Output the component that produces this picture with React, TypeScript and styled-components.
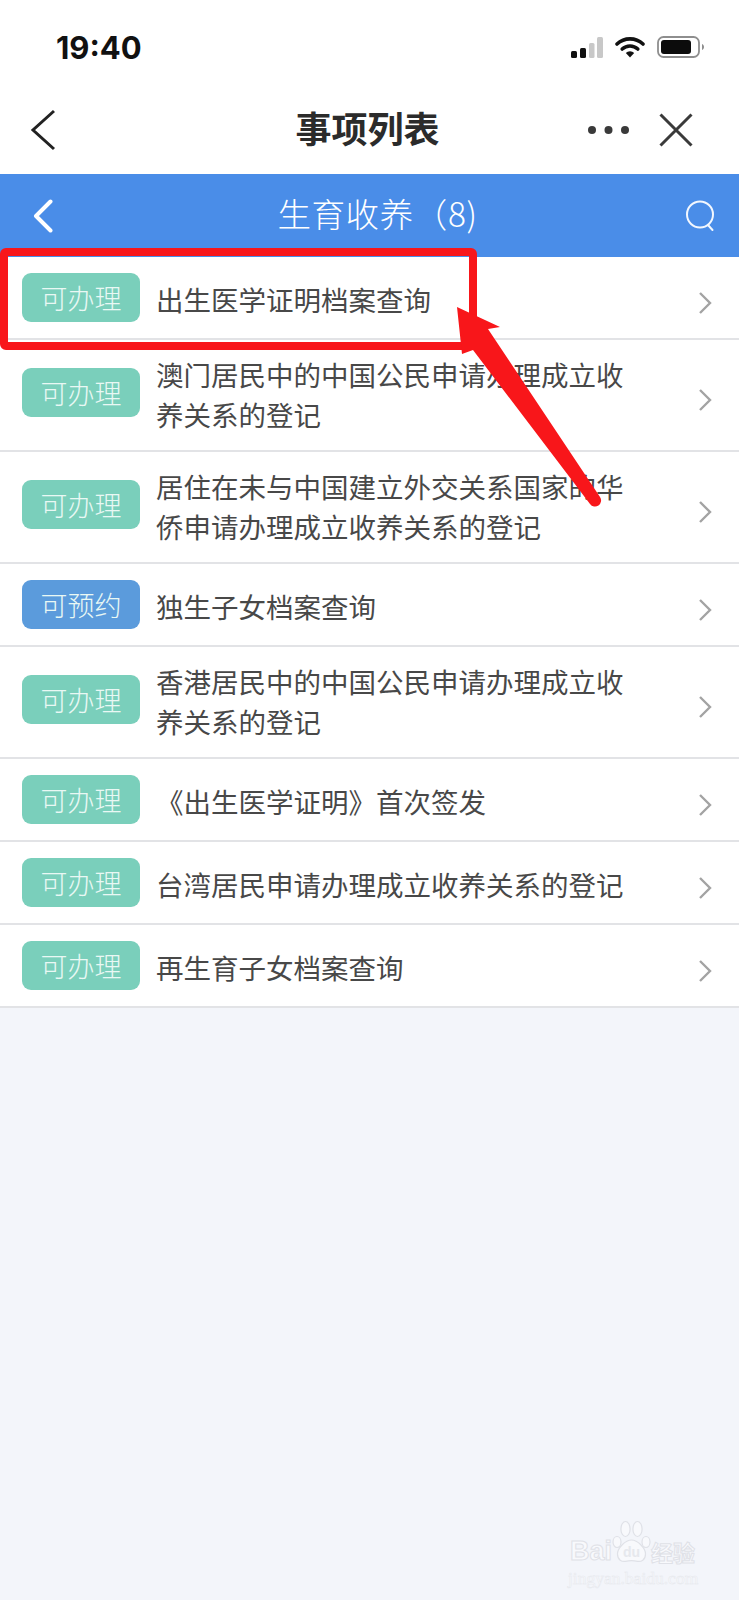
import React from 'react';
import styled, { createGlobalStyle } from 'styled-components';

const GlobalStyle = createGlobalStyle`
  html, body {
    margin: 0;
    padding: 0;
    background: #f3f5fa;
  }
  * {
    box-sizing: border-box;
  }
`;

const Page = styled.div`
  position: relative;
  width: 739px;
  height: 1600px;
  overflow: hidden;
  background: #f3f5fa;
  font-family: 'Noto Sans CJK SC', 'Noto Sans', sans-serif;
`;

const StatusBar = styled.div`
  height: 94px;
  padding: 0 35px 0 56px;
  background: #fff;
  display: flex;
  align-items: center;
  justify-content: space-between;
`;

const Clock = styled.span`
  font-family: Inter, 'Liberation Sans', sans-serif;
  font-size: 31px;
  font-weight: 700;
  color: #111;
`;

const StatusIcons = styled.div`
  display: flex;
  align-items: flex-end;
  gap: 12px;
`;

const NavBar = styled.div`
  height: 80px;
  padding: 0 46px 8px 30px;
  background: #fff;
  display: flex;
  align-items: center;
  justify-content: space-between;
`;

const NavTitle = styled.h1`
  margin: 0 0 6px;
  font-size: 36px;
  font-weight: 700;
  color: #2b2b2b;
  flex: 1;
  text-align: center;
  padding-left: 92px;
`;

const NavActions = styled.div`
  display: flex;
  align-items: center;
  gap: 29px;
`;

const BlueBar = styled.div`
  height: 83px;
  padding: 0 23px 0 33px;
  background: #4a8de8;
  display: flex;
  align-items: center;
  justify-content: space-between;
`;

const BlueTitle = styled.div`
  font-size: 33.5px;
  font-weight: 300;
  letter-spacing: 0.6px;
  color: #fff;
  margin: 0 0 6px 17px;
`;

const List = styled.div`
  background: #fff;
`;

const Row = styled.div<{ $tall?: boolean }>`
  height: ${(p) => (p.$tall ? 112 : 83)}px;
  padding: 0 27px 0 22px;
  display: flex;
  align-items: center;
  border-bottom: 2px solid #e2e3e6;
`;

const Badge = styled.span<{ $blue?: boolean; $tall?: boolean }>`
  flex: none;
  width: 118px;
  height: 49px;
  margin: 0 16px ${(p) => (p.$tall ? 6 : 0)}px 0;
  border-radius: 9px;
  background: ${(p) => (p.$blue ? '#5b9bdc' : '#7acfbb')};
  color: #e9f8f4;
  font-size: 27px;
  font-weight: 300;
  line-height: 49px;
  text-align: center;
`;

const RowText = styled.div<{ $tall?: boolean }>`
  flex: 1;
  font-size: 27.5px;
  line-height: 40px;
  color: #484848;
  padding-right: 58px;
  margin: ${(p) => (p.$tall ? '0 0 2px' : '2px 0 0')};
`;

const RowChevron = styled.svg`
  flex: none;
  margin-top: 10px;
`;

const Watermark = styled.div`
  position: absolute;
  left: 568px;
  top: 1520px;
  width: 132px;
  color: #f8f9fc;
`;

const MarkTop = styled.div`
  display: flex;
  align-items: flex-end;
  height: 43px;
`;

const MarkBai = styled.span`
  font-family: 'Liberation Sans', sans-serif;
  font-size: 27px;
  font-weight: 700;
  line-height: 24px;
  margin-left: 2px;
  -webkit-text-stroke: 1px #dfe1e7;
`;

const MarkCn = styled.span`
  font-size: 22px;
  font-weight: 700;
  line-height: 24px;
  -webkit-text-stroke: 1px #dfe1e7;
`;

const MarkUrl = styled.div`
  font-family: 'Liberation Serif', serif;
  font-size: 17.5px;
  line-height: 20px;
  margin-top: 5px;
  white-space: nowrap;
  -webkit-text-stroke: 0.5px #e6e8ed;
`;

const Annotation = styled.svg`
  position: absolute;
  left: 0;
  top: 0;
  pointer-events: none;
`;

const SignalIcon = () => (
  <svg width="32" height="21" viewBox="0 0 32 21">
    <rect x="0" y="14" width="6" height="7" rx="1.5" fill="#111" />
    <rect x="9" y="11" width="6" height="10" rx="1.5" fill="#111" />
    <rect x="18" y="6" width="5.5" height="15" rx="1.5" fill="#c8c8c8" />
    <rect x="26" y="0" width="6" height="21" rx="1.5" fill="#c8c8c8" />
  </svg>
);

const WifiIcon = () => (
  <svg width="30" height="22" viewBox="0 0 30 22">
    <path d="M2 8a19 19 0 0 1 26 0" fill="none" stroke="#111" strokeWidth="3.6" strokeLinecap="round" />
    <path d="M7.2 13a11.5 11.5 0 0 1 15.6 0" fill="none" stroke="#111" strokeWidth="3.6" strokeLinecap="round" />
    <path d="M10.8 17a5.8 5.8 0 0 1 8.4 0L15 21.5z" fill="#111" />
  </svg>
);

const BatteryIcon = () => (
  <svg width="47" height="22" viewBox="0 0 47 22">
    <rect x="1" y="1" width="41" height="20" rx="5.5" fill="none" stroke="#8e8e8e" strokeWidth="1.8" />
    <rect x="4" y="4" width="30" height="14" rx="3" fill="#0c0c0c" />
    <path d="M45 8c1.4.6 2 1.7 2 3s-.6 2.4-2 3z" fill="#8e8e8e" />
  </svg>
);

const BackIcon = () => (
  <svg width="26" height="42" viewBox="0 0 26 42">
    <path d="M24 2 3 21l21 19" fill="none" stroke="#222" strokeWidth="3" />
  </svg>
);

const DotsIcon = () => (
  <svg width="43" height="10" viewBox="0 0 43 10">
    <circle cx="5" cy="5" r="4" fill="#3a3a3a" />
    <circle cx="21.5" cy="5" r="4" fill="#3a3a3a" />
    <circle cx="38" cy="5" r="4" fill="#3a3a3a" />
  </svg>
);

const CloseIcon = () => (
  <svg width="34" height="34" viewBox="0 0 34 34">
    <path d="M1.5 1.5l31 31M32.5 1.5l-31 31" fill="none" stroke="#3a3a3a" strokeWidth="3" />
  </svg>
);

const WhiteBackIcon = () => (
  <svg width="20" height="34" viewBox="0 0 20 34">
    <path d="M17.5 2.5 3 17l14.5 14.5" fill="none" stroke="#fff" strokeWidth="4" strokeLinecap="round" strokeLinejoin="round" />
  </svg>
);

const SearchIcon = () => (
  <svg width="31" height="32" viewBox="0 0 31 32">
    <circle cx="15" cy="14.5" r="13" fill="none" stroke="#f2f7fe" strokeWidth="2" />
    <path d="M23 25l4.5 5" fill="none" stroke="#f2f7fe" strokeWidth="2" strokeLinecap="round" />
  </svg>
);

const PawIcon = () => (
  <svg width="39" height="43" viewBox="0 0 39 43" fill="#f8f9fc" stroke="#dfe1e7" strokeWidth="1.2">
    <ellipse cx="5" cy="22" rx="4" ry="5.5" />
    <ellipse cx="13.5" cy="9" rx="4.6" ry="7.5" />
    <ellipse cx="25.5" cy="9" rx="4.6" ry="7.5" />
    <ellipse cx="34" cy="22" rx="4" ry="5.5" />
    <path d="M19.5 20c6 0 14 8 14 14 0 6-4.500 8-8 7.300-3.500-.7-8.500-.7-12 0-3.500.7-8-1.300-8-7.300 0-6 8-14 14-14z" />
    <text x="19.500" y="37" textAnchor="middle" fontFamily="Liberation Sans, sans-serif" fontSize="14" fontWeight="700" fill="#e6e8ed" stroke="none">du</text>
  </svg>
);

interface Item {
  label: string;
  blue?: boolean;
  lines: string;
  tall?: boolean;
}

const items: Item[] = [
  { label: '可办理', lines: '出生医学证明档案查询' },
  { label: '可办理', lines: '澳门居民中的中国公民申请办理成立收养关系的登记', tall: true },
  { label: '可办理', lines: '居住在未与中国建立外交关系国家的华侨申请办理成立收养关系的登记', tall: true },
  { label: '可预约', lines: '独生子女档案查询', blue: true },
  { label: '可办理', lines: '香港居民中的中国公民申请办理成立收养关系的登记', tall: true },
  { label: '可办理', lines: '《出生医学证明》首次签发' },
  { label: '可办理', lines: '台湾居民申请办理成立收养关系的登记' },
  { label: '可办理', lines: '再生育子女档案查询' },
];

const App: React.FC = () => {
  return (
    <Page>
      <GlobalStyle />
      <StatusBar>
        <Clock>19:40</Clock>
        <StatusIcons>
          <SignalIcon />
          <WifiIcon />
          <BatteryIcon />
        </StatusIcons>
      </StatusBar>
      <NavBar>
        <BackIcon />
        <NavTitle>事项列表</NavTitle>
        <NavActions>
          <DotsIcon />
          <CloseIcon />
        </NavActions>
      </NavBar>
      <BlueBar>
        <WhiteBackIcon />
        <BlueTitle>生育收养（8)</BlueTitle>
        <SearchIcon />
      </BlueBar>
      <List>
        {items.map((item, i) => (
          <Row key={i} $tall={item.tall}>
            <Badge $blue={item.blue} $tall={item.tall}>{item.label}</Badge>
            <RowText $tall={item.tall}>{item.lines}</RowText>
            <RowChevron width="14" height="24" viewBox="0 0 14 24">
              <path d="M2 2l10 10L2 22" fill="none" stroke="#a3a3a3" strokeWidth="2.4" />
            </RowChevron>
          </Row>
        ))}
      </List>
      <Annotation width="739" height="600" viewBox="0 0 739 600">
        <rect x="4" y="252" width="469" height="94" rx="2" fill="none" stroke="#f8161a" strokeWidth="8" />
        <path d="M457 307 500 327 488 329 600 497A5.500 5.500 0 0 1 590 504L473 350 462 354z" fill="#f8161a" />
      </Annotation>
      <Watermark>
        <MarkTop>
          <MarkBai>Bai</MarkBai>
          <PawIcon />
          <MarkCn>经验</MarkCn>
        </MarkTop>
        <MarkUrl>jingyan.baidu.com</MarkUrl>
      </Watermark>
    </Page>
  );
};

export default App;
